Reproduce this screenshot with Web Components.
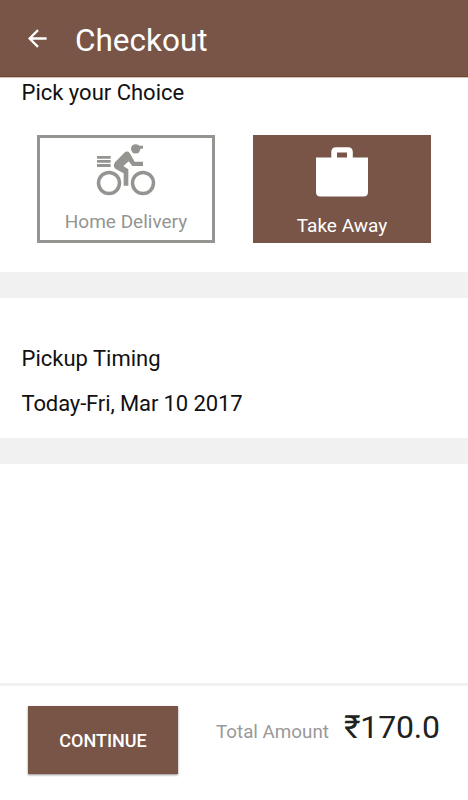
<!DOCTYPE html>
<html lang="en">
<head>
  <meta charset="utf-8">
  <title>Checkout</title>
  <style>
    body {
      margin: 0;
      font-family: Roboto, "Liberation Sans", sans-serif;
      background: #fff;
      color: #111;
    }
  </style>
</head>
<body>
  <checkout-page></checkout-page>

  <script>
    class AppBar extends HTMLElement {
      constructor() {
        super();
        this.attachShadow({ mode: 'open' });
        this.shadowRoot.innerHTML = `
          <style>
            :host {
              display: flex;
              align-items: center;
              box-sizing: border-box;
              height: 77px;
              padding-left: 28px;
              background: #795548;
              border-bottom: 1px solid #754532;
              box-shadow: 0 1px #d2bfb6;
              color: #fff;
            }

            svg {
              display: block;
              width: 19px;
              height: 19px;
              margin-right: 28px;
            }

            h1 {
              margin: 0;
              padding-top: 5px;
              font-size: 31.5px;
              font-weight: 400;
              line-height: 40px;
            }
          </style>
          <svg viewBox="0 0 19 19" fill="none" stroke="currentColor" stroke-width="2.3">
            <path d="M18.6 9.5H2M10 1.1L1.6 9.5L10 17.9"/>
          </svg>
          <h1><slot></slot></h1>
        `;
      }
    }

    class ChoiceCard extends HTMLElement {
      constructor() {
        super();
        this.attachShadow({ mode: 'open' });
        this.shadowRoot.innerHTML = `
          <style>
            :host {
              display: flex;
              flex-direction: column;
              align-items: center;
              box-sizing: border-box;
              width: 178px;
              height: 108px;
              padding-top: 5px;
              border: 3px solid #949590;
              background: #fff;
              color: #949590;
              font-size: 19px;
            }

            :host([selected]) {
              padding-top: 9px;
              border-color: #795548;
              background: #795548;
              color: #fff;
            }

            .label {
              margin-top: 14px;
              line-height: 24px;
            }

            :host([selected]) .label {
              margin-top: 17px;
            }

            ::slotted(svg) {
              display: block;
              fill: currentColor;
            }
          </style>
          <slot name="icon"></slot>
          <div class="label"><slot></slot></div>
        `;
      }
    }

    class PageSection extends HTMLElement {
      constructor() {
        super();
        this.attachShadow({ mode: 'open' });
        this.shadowRoot.innerHTML = `
          <style>
            :host {
              display: block;
              box-sizing: border-box;
              border-bottom: 26px solid #f1f1f1;
              font-size: 22px;
              line-height: 27px;
            }
          </style>
          <slot></slot>
        `;
      }
    }

    class CheckoutFooter extends HTMLElement {
      constructor() {
        super();
        this.attachShadow({ mode: 'open' });
        this.shadowRoot.innerHTML = `
          <style>
            :host {
              display: flex;
              align-items: flex-start;
              box-sizing: border-box;
              height: 117px;
              padding: 20px 0 0 28px;
              border-top: 3px solid #f1f1f1;
            }

            button {
              width: 150px;
              height: 68px;
              padding: 2px 0 0;
              border: 0;
              background: #795548;
              box-shadow: 0 1px 2px rgba(0, 0, 0, 0.45);
              color: #fff;
              font: 500 18px/24px Roboto, "Liberation Sans", sans-serif;
            }

            .total {
              display: flex;
              align-items: baseline;
              margin: 1px 0 0 38px;
              line-height: 40px;
            }

            .caption {
              width: 128px;
              color: #999;
              font-size: 18.8px;
            }

            .amount {
              color: #212121;
              font-size: 32px;
              letter-spacing: -0.2px;
            }
          </style>
          <button type="button">CONTINUE</button>
          <div class="total">
            <span class="caption">Total Amount</span>
            <span class="amount">${this.getAttribute('amount')}</span>
          </div>
        `;
      }
    }

    class CheckoutPage extends HTMLElement {
      constructor() {
        super();
        this.attachShadow({ mode: 'open' });
        this.shadowRoot.innerHTML = `
          <style>
            :host {
              display: flex;
              flex-direction: column;
              height: 800px;
              overflow: hidden;
            }

            .choice {
              height: 221px;
              padding-top: 2px;
            }

            .timing {
              height: 166px;
              padding-top: 47px;
            }

            .line {
              padding-left: 21.5px;
            }

            .date {
              margin-top: 18px;
              letter-spacing: -0.12px;
            }

            .cards {
              display: flex;
              justify-content: space-between;
              padding: 29px 37px 0;
            }

            checkout-footer {
              margin-top: auto;
            }
          </style>
          <app-bar>Checkout</app-bar>
          <page-section class="choice">
            <div class="line">Pick your Choice</div>
            <div class="cards">
              <choice-card>
                <svg slot="icon" width="60" height="53" viewBox="33 24 180 159">
                  <path d="M36 63h41v8H36zM36 75h41v8H36zM36 87h41v9H36z"/>
                  <g fill="none" stroke="currentColor" stroke-width="10.5">
                    <circle cx="72" cy="144" r="31.5"/>
                    <circle cx="174" cy="144" r="31.5"/>
                  </g>
                  <circle cx="152" cy="41.5" r="14"/>
                  <path d="M150 32H174V41H158z"/>
                  <path d="M118 53Q127 46 134 54L149 80H174V93H142L131 79L115 93L130 103V152H116V115L92 102Q82 94 90 82z"/>
                </svg>
                Home Delivery
              </choice-card>
              <choice-card selected>
                <svg slot="icon" width="52" height="50" viewBox="0 0 52 50">
                  <path fill-rule="evenodd" d="M0 10.5H15.3V5Q15.3 0.2 20 0.2H32Q36.8 0.2 36.8 5V10.5H52V45Q52 49.5 47.5 49.5H4.5Q0 49.5 0 45zM21 5.5V10.5H31V5.5z"/>
                </svg>
                Take Away
              </choice-card>
            </div>
          </page-section>
          <page-section class="timing">
            <div class="line">Pickup Timing</div>
            <div class="line date">Today-Fri, Mar 10 2017</div>
          </page-section>
          <checkout-footer amount="₹170.0"></checkout-footer>
        `;
      }
    }

    customElements.define('app-bar', AppBar);
    customElements.define('choice-card', ChoiceCard);
    customElements.define('page-section', PageSection);
    customElements.define('checkout-footer', CheckoutFooter);
    customElements.define('checkout-page', CheckoutPage);
  </script>
</body>
</html>
